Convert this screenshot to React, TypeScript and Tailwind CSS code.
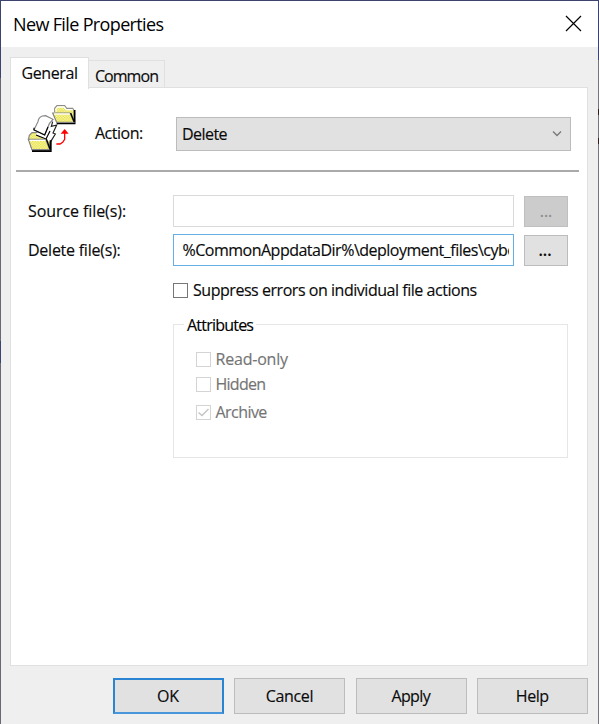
import type { ReactNode } from "react";

function FolderMoveIcon() {
  return (
    <svg width="50" height="50" viewBox="9 9 150 150" className="shrink-0">
      <defs>
        <pattern id="dither" width="8" height="8" patternUnits="userSpaceOnUse">
          <rect width="8" height="8" fill="#fbf9c4" />
          <rect width="4" height="4" fill="#e4de2a" />
          <rect x="4" y="4" width="4" height="4" fill="#e4de2a" />
        </pattern>
      </defs>
      <path d="M92 34 V22 L99 14 H122 L128 22 H146 L150 28 V60 H98 Z" fill="url(#dither)" />
      <path d="M92 34 V22 L99 14 H122 L128 22 H146 L150 28 V60" fill="none" stroke="#8c8c8c" strokeWidth="3.500" />
      <path d="M96 32 V23 L101 18 H120 L126 26 H146" fill="none" stroke="#fff" strokeWidth="4" />
      <path d="M152 27 V67 H98" fill="none" stroke="#000" strokeWidth="5" />
      <path d="M86 36 H138 L150 64 H98 Z" fill="url(#dither)" stroke="#858585" strokeWidth="3.500" />
      <path d="M90 39 H137" stroke="#fff" strokeWidth="4" />
      <path d="M140 36 L151 64" stroke="#000" strokeWidth="4" />
      <path d="M14 112 L16 103 L24 95 H42 L48 103 H78 V146 H24 Z" fill="url(#dither)" stroke="#858585" strokeWidth="3.500" />
      <path d="M34 100 L84 62 L82 76 L98 72 L88 96 L94 99 L80 124 L66 116 Z" fill="#fff" />
      <path d="M86 62 L82 76 L98 72 L87 96 L94 99 L80 122" fill="none" stroke="#222" strokeWidth="3.500" />
      <path d="M30 86 L42 62 C43 53 49 47 55 45 L65 44 L87 55 L76 68 L62 102 Z" fill="#fff" stroke="#858585" strokeWidth="3.500" />
      <path d="M30 80 V87 L62 102 L72 78 M36 102 L66 114 L78 90" fill="none" stroke="#000" strokeWidth="3.500" />
      <path d="M80 118 V150 H24" fill="none" stroke="#000" strokeWidth="6" />
      <path d="M13 115 H65 L77 146 H24 Z" fill="url(#dither)" stroke="#858585" strokeWidth="3.500" />
      <path d="M17 118 H64" stroke="#fff" strokeWidth="4" />
      <path d="M67 114 L79 146" stroke="#000" strokeWidth="4" />
      <path d="M97 129 H108 L116 124 L122 115 V94" fill="none" stroke="#f00" strokeWidth="4" />
      <path d="M122 84 L134 98 H110 Z" fill="#f00" />
    </svg>
  );
}

function Check({
  label,
  checked = false,
  tracking,
}: {
  label: string;
  checked?: boolean;
  tracking: string;
}) {
  return (
    <label className="flex h-4 items-center text-[#747474]">
      <span className="mr-[4.5px] flex h-[15px] w-[15px] shrink-0 items-center justify-center border border-[#d4d4d4] bg-white">
        {checked && (
          <svg width="13" height="13" viewBox="0 0 13 13" fill="none" stroke="#c4c4c4" strokeWidth="1.4">
            <path d="M1.500 6.500 L5 9.500 L11.500 3" />
          </svg>
        )}
      </span>
      <span className={tracking}>{label}</span>
    </label>
  );
}

function Button({ children, primary = false, tracking }: { children: ReactNode; primary?: boolean; tracking: string }) {
  return (
    <button
      className={`flex h-9 w-[111px] items-center justify-center bg-[#e1e1e1] pr-px pb-px ${tracking} ${
        primary ? "border-2 border-[#2b84d3] border-b-[#4a96da]" : "border border-[#bcbcbc]"
      }`}
    >
      {children}
    </button>
  );
}

export default function App() {
  return (
    <div className="flex h-[724px] w-[599px] flex-col overflow-hidden bg-[#efefef] font-['Open_Sans',sans-serif] text-[16px] leading-5 text-[#0a0a0a] [-webkit-text-stroke:0.15px_currentColor]">
      <div className="h-px bg-[#3c436f]" />
      <div className="flex h-[723px]">
        <div className="flex w-px shrink-0 flex-col bg-[#6a6871]">
          <div className="h-[77px] bg-[#3c436f]" />
          <div className="mt-[263px] h-[22px] bg-[#3c436f]" />
        </div>
        <div className="flex w-[597px] shrink-0 flex-col">
          <header className="flex h-[46px] shrink-0 items-center justify-between bg-white pr-4 pl-3">
            <h1 className="text-[18px] tracking-[-0.64px] text-black [-webkit-text-stroke:0px]">New File Properties</h1>
            <svg width="17" height="17" viewBox="0 0 17 17" stroke="#000" strokeWidth="1.2" className="-mt-px">
              <path d="M1 1 L16 16 M16 1 L1 16" />
            </svg>
          </header>
          <nav className="z-10 mt-[10px] ml-[9px] flex h-[31px] shrink-0 items-end">
            <div className="-mb-px flex h-8 w-[79px] items-center justify-center border border-b-0 border-[#e0e0e0] bg-white pb-0.5 tracking-[-0.4px]">
              General
            </div>
            <div className="flex h-7 w-[76px] items-center justify-center border border-b-0 border-l-0 border-[#e0e0e0] pt-0.5 tracking-[-0.95px]">
              Common
            </div>
          </nav>
          <main className="-mt-px ml-[9px] h-[579px] w-[578px] shrink-0 border border-[#e0e0e0] bg-white">
            <section className="ml-[5px] flex h-[84px] w-[563px] items-center border-b-2 border-[#aaa] pl-[11px]">
              <FolderMoveIcon />
              <span className="mt-2 ml-[18px] w-[81px] tracking-[-0.5px]">Action:</span>
              <div className="mt-[9px] flex h-[34px] w-[395px] items-center justify-between border border-[#bcbcbc] bg-[#e1e1e1] pr-2 pl-[5px] tracking-[-0.55px]">
                Delete
                <svg width="10" height="7" viewBox="0 0 10 7" fill="none" stroke="#777" strokeWidth="1.3">
                  <path d="M1 1.500 L5 5.500 L9 1.500" />
                </svg>
              </div>
            </section>
            <div className="mt-[23px] flex h-8 items-center pl-[17px]">
              <span className="w-[145px] tracking-[-0.08px]">Source file(s):</span>
              <div className="h-8 w-[341px] border border-[#dadada]" />
              <button className="ml-[10px] h-[31px] w-11 border border-[#bfbfbf] bg-[#ccc] text-[#888]">...</button>
            </div>
            <div className="mt-[7px] flex h-8 items-center pl-[17px]">
              <span className="w-[145px] tracking-[-0.25px]">Delete file(s):</span>
              <div className="flex h-8 w-[341px] items-center border border-[#66aee6] pr-1 pl-[8.5px]">
                <div className="overflow-hidden tracking-[-0.5px] whitespace-nowrap">
                  %CommonAppdataDir%\deployment_files\cybe
                </div>
              </div>
              <button className="ml-[10px] h-[31px] w-11 border border-[#bcbcbc] bg-[#e1e1e1] pr-0.5 font-semibold">...</button>
            </div>
            <label className="mt-4 ml-[162px] flex h-4 items-center">
              <span className="mr-[5px] h-[15px] w-[15px] shrink-0 border border-[#777] bg-white" />
              <span className="tracking-[-0.46px]">Suppress errors on individual file actions</span>
            </label>
            <section className="mt-[26px] ml-[162px] h-[134px] w-[395px] border border-[#e6e6e6]">
              <h2 className="-mt-[10px] ml-[10px] h-5 w-fit bg-white px-[3px] tracking-[-0.78px] text-black">Attributes</h2>
              <div className="mt-4 ml-[22px] flex flex-col">
                <Check label="Read-only" tracking="tracking-[-0.2px]" />
                <div className="h-[9px]" />
                <Check label="Hidden" tracking="tracking-[-0.75px]" />
                <div className="h-3" />
                <Check label="Archive" checked tracking="tracking-[-0.55px]" />
              </div>
            </section>
          </main>
          <footer className="mt-3 ml-[112px] flex gap-[10.4px]">
            <Button primary tracking="tracking-[-0.1px]">OK</Button>
            <Button tracking="tracking-[-0.35px]">Cancel</Button>
            <Button tracking="tracking-[-0.6px]">Apply</Button>
            <Button tracking="tracking-[-0.5px]">Help</Button>
          </footer>
        </div>
        <div className="flex w-px shrink-0 flex-col bg-[#76757a]">
          <div className="h-[59px] bg-[#3c436f]" />
          <div className="mt-[49px] h-[6px] bg-[#2b201f]" />
          <div className="mt-[23px] h-[6px] bg-[#2b201f]" />
        </div>
      </div>
    </div>
  );
}
